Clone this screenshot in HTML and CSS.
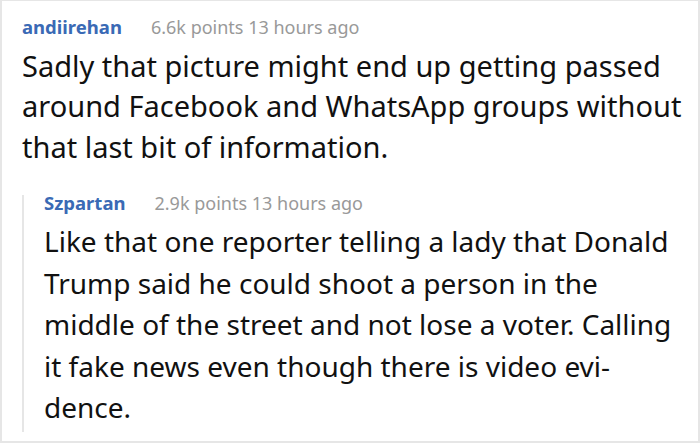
FILE: index.html
```html
<!DOCTYPE html>
<html>
<head>
<meta charset="utf-8">
<link rel="stylesheet" href="styles.css">
</head>
<body>
<div class="card">
  <div class="comment">
    <div class="meta-row">
      <span class="user">andiirehan</span>
      <span class="meta">6.6k points 13 hours ago</span>
    </div>
    <p class="text">Sadly that picture might end up getting passed<br>around Facebook and WhatsApp groups without<br>that last bit of information.</p>
  </div>
  <div class="reply">
    <div class="meta-row">
      <span class="user">Szpartan</span>
      <span class="meta">2.9k points 13 hours ago</span>
    </div>
    <p class="text reply-text">Like that one reporter telling a lady that Donald<br>Trump said he could shoot a person in the<br>middle of the street and not lose a voter. Calling<br>it fake news even though there is video evi-<br>dence.</p>
  </div>
</div>
</body>
</html>
```

FILE: styles.css
```css
html, body {
  margin: 0;
  padding: 0;
  background: #fff;
}
.card {
  width: 700px;
  height: 443px;
  box-sizing: border-box;
  border: 2px solid #e6e6e6;
  border-top-width: 1px;
  padding: 18px 20px 0 20px;
  font-family: "Noto Sans", "Open Sans", sans-serif;
  color: #111;
}
.meta-row {
  display: flex;
  align-items: baseline;
  gap: 29px;
  font-size: 18.5px;
  line-height: 16px;
  white-space: nowrap;
}
.user {
  font-weight: 700;
  color: #3a6ab5;
}
.meta {
  color: #999;
  font-size: 18px;
}
.text {
  margin: 10.5px 0 0 0;
  font-size: 29px;
  line-height: 40.5px;
  white-space: nowrap;
}
.reply {
  margin-top: 28px;
  border-left: 2px solid #e6e6e6;
  padding-left: 20px;
  padding-bottom: 3px;
}
.reply-text {
  font-size: 28px;
  line-height: 41.5px;
  margin-top: 10.4px;
}
```
